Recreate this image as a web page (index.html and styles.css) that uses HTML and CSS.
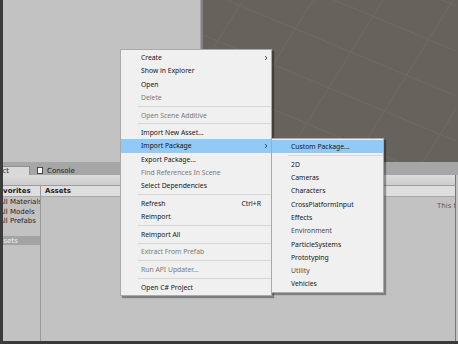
FILE: index.html
```html
<!DOCTYPE html>
<html lang="en">
<head>
    <meta charset="UTF-8">
    <meta name="viewport" content="width=device-width, initial-scale=1.0">
    <title>Project - Import Package</title>
    <link rel="stylesheet" href="styles.css">
</head>
<body>
    <div class="editor">
        <div class="edge"></div>
        <div class="workspace">
            <div class="top">
                <div class="hierarchy"></div>
                <div class="scene">
                    <svg width="253" height="162" viewBox="0 0 253 162">
                        <g stroke="#706b65" stroke-width="1" fill="none">
                            <line x1="0" y1="-100" x2="253" y2="6" />
                            <line x1="0" y1="-55" x2="253" y2="51" />
                            <line x1="0" y1="-10" x2="253" y2="96" />
                            <line x1="0" y1="35" x2="253" y2="141" />
                            <line x1="0" y1="80" x2="253" y2="186" />
                            <line x1="0" y1="125" x2="253" y2="231" />
                            <line x1="40" y1="0" x2="-60" y2="162" />
                            <line x1="110" y1="0" x2="10" y2="162" />
                            <line x1="180" y1="0" x2="80" y2="162" />
                            <line x1="250" y1="0" x2="150" y2="162" />
                            <line x1="320" y1="0" x2="220" y2="162" />
                        </g>
                    </svg>
                </div>
            </div>
            <div class="project">
                <div class="tabs">
                    <div class="tab active"><span>Project</span></div>
                    <div class="tab"><span class="tab-icon"></span>Console</div>
                </div>
                <div class="toolbar"></div>
                <div class="browser">
                    <div class="favorites">
                        <div class="col-head"><span class="fav-title">Favorites</span></div>
                        <div class="fav-item">All Materials</div>
                        <div class="fav-item">All Models</div>
                        <div class="fav-item">All Prefabs</div>
                        <div class="fav-item"></div>
                        <div class="fav-item selected"><span>Assets</span></div>
                    </div>
                    <div class="assets">
                        <div class="col-head">Assets</div>
                        <div class="empty">This folder is empty</div>
                    </div>
                </div>
            </div>
        </div>
    </div>

    <div class="menu context">
        <div class="item">Create<span class="arrow"><svg width="4" height="6" viewBox="0 0 4 6"><path d="M1 1 L3 3 L1 5" stroke="#4a4a4a" fill="none" /></svg></span></div>
        <div class="item">Show in Explorer</div>
        <div class="item">Open</div>
        <div class="item disabled">Delete</div>
        <div class="sep"></div>
        <div class="item disabled">Open Scene Additive</div>
        <div class="sep"></div>
        <div class="item">Import New Asset...</div>
        <div class="item hl">Import Package<span class="arrow"><svg width="4" height="6" viewBox="0 0 4 6"><path d="M1 1 L3 3 L1 5" stroke="#4a4a4a" fill="none" /></svg></span></div>
        <div class="item">Export Package...</div>
        <div class="item disabled">Find References In Scene</div>
        <div class="item">Select Dependencies</div>
        <div class="sep"></div>
        <div class="item">Refresh<span class="key">Ctrl+R</span></div>
        <div class="item">Reimport</div>
        <div class="sep"></div>
        <div class="item">Reimport All</div>
        <div class="sep"></div>
        <div class="item disabled">Extract From Prefab</div>
        <div class="sep"></div>
        <div class="item disabled">Run API Updater...</div>
        <div class="sep"></div>
        <div class="item">Open C# Project</div>
    </div>

    <div class="menu submenu">
        <div class="item hl">Custom Package...</div>
        <div class="sep"></div>
        <div class="item">2D</div>
        <div class="item">Cameras</div>
        <div class="item">Characters</div>
        <div class="item">CrossPlatformInput</div>
        <div class="item">Effects</div>
        <div class="item soft">Environment</div>
        <div class="item">ParticleSystems</div>
        <div class="item">Prototyping</div>
        <div class="item soft">Utility</div>
        <div class="item">Vehicles</div>
    </div>
</body>
</html>
```

FILE: styles.css
```css
body {
    margin: 0;
    width: 458px;
    height: 344px;
    overflow: hidden;
    background-color: #3a3a3a;
    font-family: "DejaVu Sans", sans-serif;
    font-size: 7px;
}

.editor {
    display: flex;
    height: 344px;
}

.edge {
    width: 3px;
    background-color: #3b3b3b;
}

.workspace {
    flex: 1;
    display: flex;
    flex-direction: column;
    min-width: 0;
}

/* top half: hierarchy + scene */
.top {
    height: 162px;
    display: flex;
}

.hierarchy {
    width: 197px;
    background-color: #c2c2c2;
    border-right: 1px solid #a4a4a4;
}

.scene {
    flex: 1;
    background-color: #68625c;
    border-left: 2px solid #86817b;
    overflow: hidden;
}

.scene svg {
    display: block;
}

/* project window */
.project {
    flex: 1;
    display: flex;
    flex-direction: column;
    background-color: #c2c2c2;
    border-bottom: 3px solid #3a3a3a;
    min-height: 0;
}

.tabs {
    height: 13px;
    display: flex;
    align-items: flex-end;
    background-color: #a6a6a6;
}

.tab {
    height: 9px;
    display: flex;
    align-items: center;
    padding-left: 7px;
    color: #1e1e1e;
}

.tab.active {
    width: 27px;
    box-sizing: border-box;
    padding: 0 20px 0 0;
    justify-content: flex-end;
    overflow: hidden;
    background-color: #d9d9d9;
    border-top: 1px solid #8e8e8e;
    border-right: 1px solid #8e8e8e;
}

.tab-icon {
    width: 4px;
    height: 5px;
    margin-right: 4px;
    background-color: #f4f4f4;
    border: 1px solid #4a4a4a;
}

.toolbar {
    height: 10px;
    background: linear-gradient(#dcdcdc, #cdcdcd);
    border-bottom: 1px solid #9c9c9c;
    margin-right: 2px;
    border-right: 1px solid #777;
}

.browser {
    flex: 1;
    display: flex;
    margin-right: 2px;
    border-right: 1px solid #777;
}

.col-head {
    height: 10px;
    display: flex;
    align-items: center;
    background-color: #dedede;
    border-bottom: 1px solid #a8a8a8;
    font-weight: bold;
    color: #222;
    white-space: nowrap;
}

.favorites {
    width: 37px;
    border-right: 1px solid #999;
    overflow: hidden;
}

.fav-title {
    margin-left: -9px;
}

.fav-item {
    height: 9.7px;
    display: flex;
    align-items: center;
    margin-left: -4px;
    color: #222;
    white-space: nowrap;
}

.fav-item.selected {
    margin-left: 0;
    background-color: #a3a3a3;
    color: #f2f2f2;
}

.fav-item.selected span {
    margin-left: -8px;
}

.assets {
    flex: 1;
    overflow: hidden;
}

.assets .col-head {
    padding-left: 4px;
}

.empty {
    padding: 5px 0 0 396px;
    color: #5a5a5a;
    white-space: nowrap;
}

/* context menus */
.menu {
    position: absolute;
    background-color: #f0f0f0;
    border: 1px solid #a9a9a9;
    box-shadow: 2px 2px 1px rgba(0, 0, 0, 0.35);
    padding: 1px 0;
    font-family: "Noto Sans", sans-serif;
    font-size: 6.8px;
    color: #141414;
}

.context {
    left: 120px;
    top: 49px;
    width: 150px;
}

.submenu {
    left: 271px;
    top: 138px;
    width: 111px;
}

.item {
    height: 13.3px;
    display: flex;
    align-items: center;
    padding-left: 20px;
    white-space: nowrap;
}

.submenu .item {
    padding-left: 19px;
}

.item.hl {
    background-color: #91c9f7;
}

.item.disabled {
    color: #7a7a7a;
}

.item.soft {
    color: #4a4a4a;
}

.key {
    margin-left: auto;
    padding-right: 10px;
}

.arrow {
    margin-left: auto;
    margin-right: 3px;
    display: flex;
}

.sep {
    height: 1px;
    margin: 1.65px 0 1.65px 17px;
    background-color: #d6d6d6;
}

.submenu .sep {
    margin-left: 16px;
}
```
